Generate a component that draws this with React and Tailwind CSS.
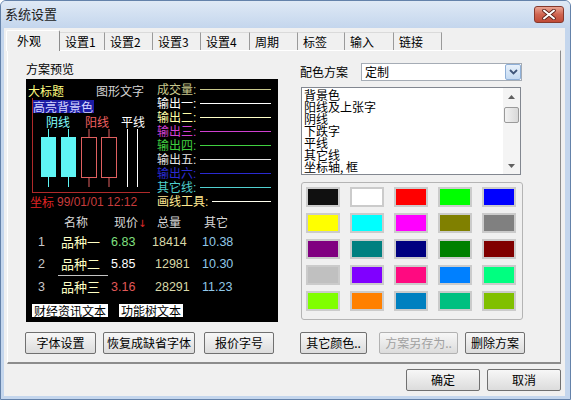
const tabs = [
  { name: "外观", w: 54, active: true },
  { name: "设置1", w: 45 },
  { name: "设置2", w: 48 },
  { name: "设置3", w: 48 },
  { name: "设置4", w: 49 },
  { name: "周期", w: 48 },
  { name: "标签", w: 47 },
  { name: "输入", w: 49 },
  { name: "链接", w: 48 },
];

const legend = [
  { label: "成交量", text: "#c8c88c", line: "#c8c88c" },
  { label: "输出一", text: "#ffffff", line: "#ffffff" },
  { label: "输出二", text: "#ffffa8", line: "#ffffc8" },
  { label: "输出三", text: "#d040d0", line: "#d040d0" },
  { label: "输出四", text: "#40d040", line: "#40d040" },
  { label: "输出五", text: "#e4e4e4", line: "#e4e4e4" },
  { label: "输出六", text: "#2a2ad0", line: "#2a2ad0" },
  { label: "其它线", text: "#50d0d0", line: "#50d0d0" },
  { label: "画线工具", text: "#ffe890", line: "#fffff0" },
];

const rows = [
  { n: "1", name: "品种一", price: "6.83", pc: "#80e080", vol: "18414", vp: 0, other: "10.38" },
  { n: "2", name: "品种二", price: "5.85", pc: "#ffffff", vol: "12981", vp: 3, other: "10.30" },
  { n: "3", name: "品种三", price: "3.16", pc: "#e05858", vol: "28291", vp: 3, other: "11.23" },
];

const schemeItems = ["背景色", "阳线及上张字", "阴线", "下跌字", "平线", "其它线", "坐标轴, 框"];

const swatches = [
  "#101010", "#ffffff", "#ff0000", "#00ff00", "#0000ff",
  "#ffff00", "#00ffff", "#ff00ff", "#808000", "#808080",
  "#800080", "#008080", "#000080", "#008000", "#800000",
  "#c0c0c0", "#8000ff", "#ff0a80", "#0080ff", "#00ff80",
  "#80ff00", "#ff8000", "#0080c0", "#00c080", "#80c000",
];

function Btn({ w, children, disabled }) {
  return (
    <div
      style={{ width: w }}
      className={`h-[22px] flex items-center justify-center whitespace-nowrap overflow-hidden rounded-[2px] border bg-gradient-to-b from-[#f7f7f7] to-[#dcdcdc] leading-[20px] ${
        disabled ? "border-[#b2b2b2] text-[#a0a0a0]" : "border-[#707070] text-black"
      }`}
    >
      {children}
    </div>
  );
}

function Candles() {
  return (
    <svg width="117" height="63" viewBox="0 0 117 63">
      <line x1="15.5" y1="0" x2="15.5" y2="58" stroke="#5ff5f5" />
      <line x1="35.5" y1="0" x2="35.5" y2="58" stroke="#5ff5f5" />
      <rect x="8" y="8" width="15" height="40" fill="#5ff5f5" />
      <rect x="28" y="8" width="15" height="40" fill="#5ff5f5" />
      <line x1="56" y1="0" x2="56" y2="8" stroke="#e06060" />
      <line x1="56" y1="49" x2="56" y2="58" stroke="#e06060" />
      <line x1="76" y1="0" x2="76" y2="8" stroke="#e06060" />
      <line x1="76" y1="49" x2="76" y2="58" stroke="#e06060" />
      <rect x="48.5" y="8.5" width="15" height="40" fill="none" stroke="#e06060" />
      <rect x="68.5" y="8.5" width="15" height="40" fill="none" stroke="#e06060" />
      <line x1="94.5" y1="0" x2="94.5" y2="58" stroke="#ffffff" />
      <line x1="104.5" y1="0" x2="104.5" y2="58" stroke="#ffffff" />
    </svg>
  );
}

export default function App() {
  const num = "font-['Liberation_Sans',sans-serif] text-[12.5px]";

  return (
    <div className="w-[571px] h-[400px] flex flex-col overflow-hidden border border-[#6482aa] rounded-t-[6px] bg-[#c4d6ed] font-['Noto_Sans_CJK_SC',sans-serif] text-[12px] text-black">
      {/* title bar */}
      <div className="h-[27px] flex items-start justify-between bg-gradient-to-b from-[#dfe9f5] to-[#c4d6ed]">
        <span className="pl-[4px] pt-[5px] text-[13px] leading-[16px] text-[#1a1a1a]">系统设置</span>
        <div className="mt-[5px] mr-[6px] w-[30px] h-[17px] rounded-[3px] border border-[#86392c] bg-gradient-to-b from-[#e9a493] via-[#cf6450] to-[#c04a36] flex items-center justify-center">
          <svg width="14" height="11" viewBox="0 0 14 11">
            <path d="M2 1.5 L12 9.5 M12 1.5 L2 9.5" stroke="#5a2018" strokeWidth="3.6" strokeLinecap="round" />
            <path d="M2 1.5 L12 9.5 M12 1.5 L2 9.5" stroke="#ffffff" strokeWidth="2" strokeLinecap="round" />
          </svg>
        </div>
      </div>

      {/* client area */}
      <div className="flex-1 ml-[3px] mr-[5px] mb-[3px] bg-[#f0f0f0] flex flex-col">
        {/* tabs */}
        <div className="h-[22px] flex items-end pl-[2px]">
          {tabs.map((t) =>
            t.active ? (
              <div
                key={t.name}
                style={{ width: t.w }}
                className="relative z-10 h-[21px] mb-[-1px] bg-[#f0f0f0] border-t border-l border-white border-r border-r-[#8c8c8c] rounded-t-[2px] pl-[10px] pt-[3px] leading-[14px]"
              >
                {t.name}
              </div>
            ) : (
              <div
                key={t.name}
                style={{ width: t.w }}
                className="h-[18px] border-t border-t-[#dadada] border-r border-r-[#9a9a9a] pl-[5px] pt-[2px] leading-[14px]"
              >
                {t.name}
              </div>
            )
          )}
        </div>

        {/* panel */}
        <div className="ml-[3px] w-[554px] h-[314px] border-t border-l border-white border-r border-r-[#8c8c8c] border-b-2 border-b-[#8c8c8c] pt-[11px] flex flex-col">
          <div className="flex items-start pl-[18px]">
            {/* preview */}
            <div className="w-[252px] flex flex-col">
              <div className="h-[14px] leading-[14px]">方案预览</div>
              <div className="mt-[3px] h-[243px] bg-black flex flex-col">
                <div className="flex h-[131px]">
                  <div className="w-[129px] pt-[4px] flex flex-col">
                    <div className="h-[15px] leading-[15px] pl-[2px] flex">
                      <span className="text-[#ffff80]">大标题</span>
                      <span className="ml-[32px] text-[#d4d4d4]">图形文字</span>
                    </div>
                    <div className="ml-[6px] w-[118px] h-[95px] border-l border-b border-[#b02a2a] flex flex-col">
                      <div className="mt-[2px] w-[61px] h-[13px] leading-[13px] bg-[#1c1ca4] text-[#d4d4ff]">高亮背景色</div>
                      <div className="mt-[2px] h-[14px] leading-[14px] flex">
                        <span className="ml-[13px] text-[#80ffff]">阴线</span>
                        <span className="ml-[15px] text-[#f06060]">阳线</span>
                        <span className="ml-[12px] text-white">平线</span>
                      </div>
                      <Candles />
                    </div>
                    <div className="mt-[1px] h-[16px] leading-[16px] pl-[4px] flex items-center">
                      <span className="text-[#e02424]">坐标</span>
                      <span className={`ml-[3px] text-[#c83c3c] font-['Liberation_Sans',sans-serif] text-[12px]`}>99/01/01 12:12</span>
                    </div>
                  </div>
                  <div className="flex-1 pt-[3px] flex flex-col">
                    {legend.map((l) => (
                      <div key={l.label} className="h-[14px] flex items-center pl-[2px]">
                        <span className="leading-[14px] whitespace-nowrap" style={{ color: l.text }}>
                          {l.label}
                          <span className="font-['Liberation_Sans',sans-serif]">:</span>
                        </span>
                        <div className="flex-1 h-px ml-[4px] mr-[7px]" style={{ background: l.line }} />
                      </div>
                    ))}
                  </div>
                </div>

                {/* quote table */}
                <div className="mt-[5px] h-[14px] leading-[14px] flex text-[#d8d8d8]">
                  <div className="w-[35px]" />
                  <div className="w-[50px] pl-[3px]">名称</div>
                  <div className="w-[41px] pl-[3px] whitespace-nowrap">
                    现价<span className="text-[#e02c2c] font-['DejaVu_Sans',sans-serif] text-[10px]">↓</span>
                  </div>
                  <div className="w-[50px] pl-[5px]">总量</div>
                  <div className="flex-1 pl-[2px]">其它</div>
                </div>
                <div className="mt-[2px] flex flex-col">
                  {rows.map((r) => (
                    <div key={r.n} className="flex flex-col">
                      <div className="h-[22px] flex items-center">
                        <div className={`w-[35px] pl-[12px] text-[#c8c8c8] ${num}`}>{r.n}</div>
                        <div className="w-[50px] text-[#ffffc4] text-[13px]">{r.name}</div>
                        <div className={`w-[41px] ${num}`} style={{ color: r.pc }}>{r.price}</div>
                        <div className={`w-[50px] text-[#d8d8a8] ${num}`} style={{ paddingLeft: r.vp }}>{r.vol}</div>
                        <div className={`flex-1 text-[#90c8e8] ${num}`}>{r.other}</div>
                      </div>
                      {r.n === "2" && <div className="ml-[32px] w-[50px] h-px bg-[#c4c4c4]" />}
                    </div>
                  ))}
                </div>
                <div className="mt-[6px] h-[13px] flex">
                  <div className="ml-[6px] w-[76px] h-[13px] leading-[13px] bg-white text-black text-center">财经资讯文本</div>
                  <div className="ml-[11px] w-[64px] h-[13px] leading-[13px] bg-white text-black text-center">功能树文本</div>
                </div>
              </div>
            </div>

            {/* scheme */}
            <div className="ml-[22px] w-[223px] flex flex-col">
              <div className="mt-[1px] h-[18px] flex items-center">
                <div className="w-[61px] leading-[18px]">配色方案</div>
                <div className="w-[161px] h-[18px] border border-[#a5acb5] bg-white flex items-center">
                  <span className="pl-[3px] leading-[16px]">定制</span>
                  <div className="ml-auto w-[16px] h-[16px] rounded-[2px] border border-[#8fb0d8] bg-gradient-to-b from-[#e8f1fb] to-[#c4daf2] flex items-center justify-center">
                    <svg width="9" height="6" viewBox="0 0 9 6">
                      <path d="M1 1 L4.5 4.5 L8 1" fill="none" stroke="#3f567a" strokeWidth="1.8" />
                    </svg>
                  </div>
                </div>
              </div>

              <div className="mt-[6px] ml-[1px] w-[220px] h-[88px] border border-[#828790] bg-white flex">
                <div className="flex-1 pt-[1px] pl-[2px] flex flex-col overflow-hidden">
                  {schemeItems.map((s) => (
                    <div key={s} className="leading-[12px] h-[12px] whitespace-nowrap">{s}</div>
                  ))}
                </div>
                <div className="w-[17px] bg-[#f4f4f4] flex flex-col">
                  <div className="h-[17px] flex items-center justify-center">
                    <svg width="7" height="4" viewBox="0 0 7 4">
                      <path d="M0 4 L3.5 0 L7 4 Z" fill="#606060" />
                    </svg>
                  </div>
                  <div className="mt-[2px] mx-[1px] h-[16px] rounded-[2px] border border-[#9a9a9a] bg-gradient-to-r from-[#f2f2f2] to-[#d9d9d9]" />
                  <div className="flex-1" />
                  <div className="h-[17px] flex items-center justify-center">
                    <svg width="7" height="4" viewBox="0 0 7 4">
                      <path d="M0 0 L3.5 4 L7 0 Z" fill="#606060" />
                    </svg>
                  </div>
                </div>
              </div>

              <div className="mt-[7px] ml-[1px] w-[222px] h-[138px] border border-[#b4b4b4] rounded-[3px] pt-[4px] pl-[4px] grid grid-cols-[repeat(5,34px)] auto-rows-[20px] gap-x-[10px] gap-y-[6px] content-start">
                {swatches.map((c, i) => (
                  <div key={i} className="w-[34px] h-[20px] border-2 border-[#cbcbcb]" style={{ background: c }} />
                ))}
              </div>
            </div>
          </div>

          {/* panel buttons */}
          <div className="mt-[10px] flex pl-[17px]">
            <Btn w={71}>字体设置</Btn>
            <div className="w-[7px]" />
            <Btn w={92}>恢复成缺省字体</Btn>
            <div className="w-[9px]" />
            <Btn w={70}>报价字号</Btn>
            <div className="w-[26px]" />
            <Btn w={67}>其它颜色..</Btn>
            <div className="w-[12px]" />
            <Btn w={79} disabled>方案另存为..</Btn>
            <div className="w-[7px]" />
            <Btn w={60}>删除方案</Btn>
          </div>
        </div>

        {/* dialog buttons */}
        <div className="pt-[5px] pr-[4px] flex justify-end gap-[7px]">
          <Btn w={74}>确定</Btn>
          <Btn w={74}>取消</Btn>
        </div>
      </div>
    </div>
  );
}
